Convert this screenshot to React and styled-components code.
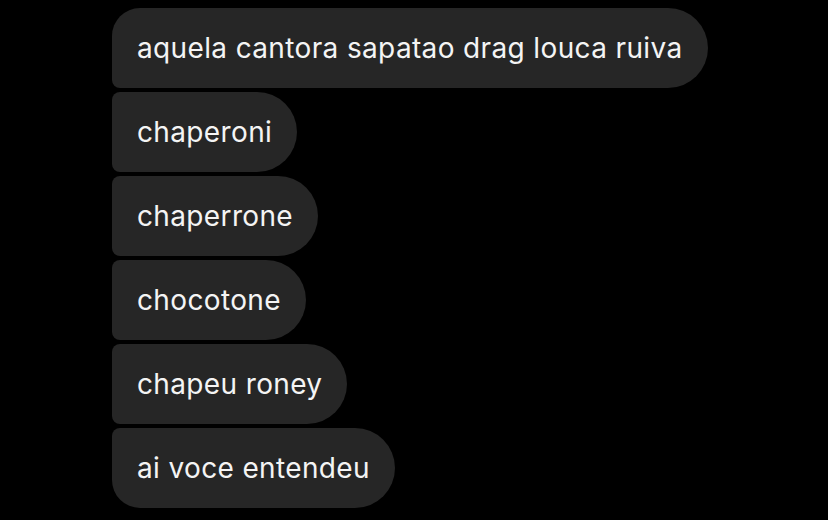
import React from "react";
import styled, { createGlobalStyle } from "styled-components";

const GlobalStyle = createGlobalStyle`
  html, body {
    margin: 0;
    padding: 0;
    background: #000000;
  }
`;

const Thread = styled.div`
  width: 828px;
  height: 520px;
  box-sizing: border-box;
  padding: 8px 0 0 112px;
  display: flex;
  flex-direction: column;
  align-items: flex-start;
  gap: 4px;
  background: #000000;
  overflow: hidden;
`;

const Bubble = styled.div`
  height: 80px;
  box-sizing: border-box;
  padding: 0 25px 0 25px;
  display: flex;
  align-items: center;
  background: #262626;
  color: #f4f4f4;
  font-family: Inter, "Liberation Sans", sans-serif;
  font-size: 28px;
  letter-spacing: 0.36px;
  border-radius: ${({ $pos }) =>
    $pos === "first"
      ? "28px 40px 40px 8px"
      : $pos === "last"
      ? "8px 40px 40px 28px"
      : "8px 40px 40px 8px"};
`;

const messages = [
  "aquela cantora sapatao drag louca ruiva",
  "chaperoni",
  "chaperrone",
  "chocotone",
  "chapeu roney",
  "ai voce entendeu",
];

const App = () => {
  return (
    <>
      <GlobalStyle />
      <Thread>
        {messages.map((m, i) => (
          <Bubble
            key={i}
            $pos={i === 0 ? "first" : i === messages.length - 1 ? "last" : "mid"}
          >
            {m}
          </Bubble>
        ))}
      </Thread>
    </>
  );
};

export default App;
